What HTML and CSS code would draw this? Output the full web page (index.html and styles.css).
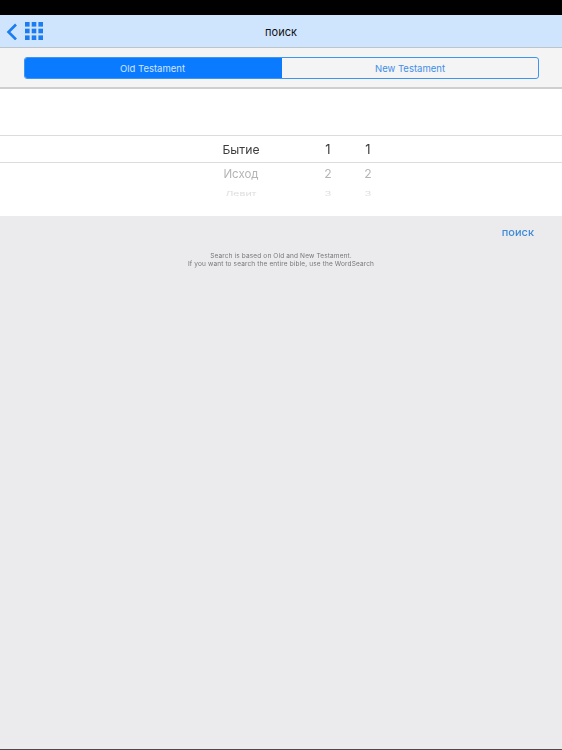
FILE: index.html
```html
<!DOCTYPE html>
<html lang="en">
<head>
  <meta charset="UTF-8">
  <meta name="viewport" content="width=device-width, initial-scale=1.0">
  <title>поиск</title>
  <link rel="stylesheet" href="styles.css">
</head>
<body>
  <div class="status-bar"></div>

  <header class="nav-bar">
    <div class="nav-icons">
      <svg class="back-icon" width="12" height="18" viewBox="0 0 12 18">
        <path d="M10 2.5 L2.5 10 L10 17.5" fill="none" stroke="#1b7df0" stroke-width="2.6"/>
      </svg>
      <svg class="grid-icon" width="18" height="18" viewBox="0 0 18 18" fill="#1b7df0">
        <rect x="0" y="0" width="4.6" height="4.6"/><rect x="6.7" y="0" width="4.6" height="4.6"/><rect x="13.4" y="0" width="4.6" height="4.6"/>
        <rect x="0" y="6.7" width="4.6" height="4.6"/><rect x="6.7" y="6.7" width="4.6" height="4.6"/><rect x="13.4" y="6.7" width="4.6" height="4.6"/>
        <rect x="0" y="13.4" width="4.6" height="4.6"/><rect x="6.7" y="13.4" width="4.6" height="4.6"/><rect x="13.4" y="13.4" width="4.6" height="4.6"/>
      </svg>
    </div>
    <h1 class="nav-title">поиск</h1>
  </header>

  <!-- Testament switch -->
  <div class="segment-bar">
    <div class="segment">
      <div class="segment-item active">Old Testament</div>
      <div class="segment-item">New Testament</div>
    </div>
  </div>

  <!-- Book / chapter / verse picker -->
  <div class="picker">
    <div class="picker-row row-selected">
      <span class="col-book">Бытие</span><span class="col-num">1</span><span class="col-num">1</span>
    </div>
    <div class="picker-row row-next">
      <span class="col-book">Исход</span><span class="col-num">2</span><span class="col-num">2</span>
    </div>
    <div class="picker-row row-far">
      <span class="col-book">Левит</span><span class="col-num">3</span><span class="col-num">3</span>
    </div>
  </div>

  <main class="content">
    <div class="search-row"><a class="search-link" href="#">поиск</a></div>
    <p class="note">Search is based on Old and New Testament.<br>If you want to search the entire bible, use the WordSearch</p>
  </main>
</body>
</html>
```

FILE: styles.css
```css
html, body {
  height: 100%;
}
body {
  margin: 0;
  height: 750px;
  overflow: hidden;
  display: flex;
  flex-direction: column;
  font-family: "Inter", "Liberation Sans", Arial, sans-serif;
  background-color: #ebebed;
  will-change: opacity;
}
.status-bar {
  height: 15px;
  background-color: #000;
}
.nav-bar {
  position: relative;
  height: 32px;
  background-color: #cfe4fd;
  border-bottom: 1px solid #bcc4cc;
  display: flex;
  align-items: center;
  justify-content: center;
}
.nav-icons {
  position: absolute;
  left: 6px;
  top: 7px;
  display: flex;
  align-items: center;
  gap: 7px;
}
.back-icon {
  display: block;
}
.grid-icon {
  display: block;
}
.nav-title {
  margin: 2px 0 0;
  font-size: 11px;
  font-weight: 400;
  color: #111;
}
.segment-bar {
  height: 41px;
  box-sizing: border-box;
  padding: 9px 23px 9px 24px;
  background-color: #f4f4f4;
  border-bottom: 2px solid #cfcfcf;
}
.segment {
  display: flex;
  height: 20px;
  border: 1px solid #3f95ee;
  border-radius: 3px;
  overflow: hidden;
}
.segment-item {
  flex: 1;
  display: flex;
  align-items: center;
  justify-content: center;
  font-size: 9.5px;
  color: #3f8fe8;
}
.segment-item.active {
  flex: 0 0 257px;
  box-sizing: border-box;
  padding-right: 2px;
  background-color: #0a7bff;
  color: #cfe4ff;
}
.picker {
  height: 127px;
  box-sizing: border-box;
  padding-top: 46px;
  background-color: #fff;
  overflow: hidden;
}
.picker-row {
  display: flex;
  align-items: center;
  padding-left: 201px;
  opacity: 0.99;
}
.col-book {
  width: 80px;
  text-align: center;
}
.col-num {
  width: 40px;
  text-align: center;
  font-size: 1.06em;
}
.col-book + .col-num {
  margin-left: 27px;
}
.row-selected {
  height: 26px;
  border-top: 1px solid #dcdcdc;
  border-bottom: 1px solid #dcdcdc;
  font-size: 12.2px;
  color: #3a3a3a;
}
.row-next {
  height: 21px;
  font-size: 11.5px;
  color: #b4b4b4;
}
.row-far {
  height: 14px;
  margin-top: 3px;
  font-size: 10.5px;
  color: #dddddd;
  transform: scaleY(0.55);
}
.content {
  flex: 1;
  border-bottom: 1px solid #4a4a4a;
}
.search-row {
  display: flex;
  justify-content: flex-end;
  padding: 9px 28px 0 0;
  height: 17px;
}
.search-link {
  font-size: 11px;
  font-weight: 500;
  color: #3f8bd8;
  text-decoration: none;
}
.note {
  margin: 10px 0 0;
  font-size: 6.5px;
  line-height: 8px;
  letter-spacing: 0.14px;
  text-align: center;
  color: #77777b;
}
```
